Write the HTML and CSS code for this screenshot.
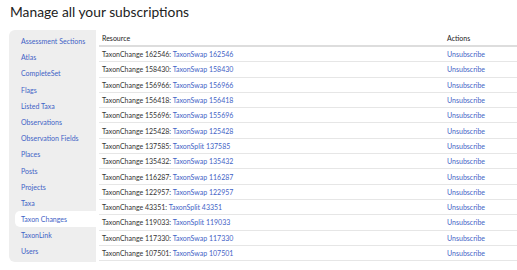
FILE: index.html
```html
<!DOCTYPE html>
<html lang="en">
<head>
    <meta charset="UTF-8">
    <title>Manage all your subscriptions</title>
    <link rel="stylesheet" href="styles.css">
</head>
<body>
    <h1>Manage all your subscriptions</h1>
    <div class="layout">
        <ul class="side-nav">
            <li><a href="#">Assessment Sections</a></li>
            <li><a href="#">Atlas</a></li>
            <li><a href="#">CompleteSet</a></li>
            <li><a href="#">Flags</a></li>
            <li><a href="#">Listed Taxa</a></li>
            <li><a href="#">Observations</a></li>
            <li><a href="#">Observation Fields</a></li>
            <li><a href="#">Places</a></li>
            <li><a href="#">Posts</a></li>
            <li><a href="#">Projects</a></li>
            <li><a href="#">Taxa</a></li>
            <li class="active"><a href="#">Taxon Changes</a></li>
            <li><a href="#">TaxonLink</a></li>
            <li><a href="#">Users</a></li>
        </ul>

        <table class="subs-table">
            <thead>
                <tr>
                    <th>Resource</th>
                    <th class="actions">Actions</th>
                </tr>
            </thead>
            <tbody>
                <tr><td>TaxonChange 162546: <a href="#">TaxonSwap 162546</a></td><td class="actions"><a href="#">Unsubscribe</a></td></tr>
                <tr><td>TaxonChange 158430: <a href="#">TaxonSwap 158430</a></td><td class="actions"><a href="#">Unsubscribe</a></td></tr>
                <tr><td>TaxonChange 156966: <a href="#">TaxonSwap 156966</a></td><td class="actions"><a href="#">Unsubscribe</a></td></tr>
                <tr><td>TaxonChange 156418: <a href="#">TaxonSwap 156418</a></td><td class="actions"><a href="#">Unsubscribe</a></td></tr>
                <tr><td>TaxonChange 155696: <a href="#">TaxonSwap 155696</a></td><td class="actions"><a href="#">Unsubscribe</a></td></tr>
                <tr><td>TaxonChange 125428: <a href="#">TaxonSwap 125428</a></td><td class="actions"><a href="#">Unsubscribe</a></td></tr>
                <tr><td>TaxonChange 137585: <a href="#">TaxonSplit 137585</a></td><td class="actions"><a href="#">Unsubscribe</a></td></tr>
                <tr><td>TaxonChange 135432: <a href="#">TaxonSwap 135432</a></td><td class="actions"><a href="#">Unsubscribe</a></td></tr>
                <tr><td>TaxonChange 116287: <a href="#">TaxonSwap 116287</a></td><td class="actions"><a href="#">Unsubscribe</a></td></tr>
                <tr><td>TaxonChange 122957: <a href="#">TaxonSwap 122957</a></td><td class="actions"><a href="#">Unsubscribe</a></td></tr>
                <tr><td>TaxonChange 43351: <a href="#">TaxonSplit 43351</a></td><td class="actions"><a href="#">Unsubscribe</a></td></tr>
                <tr><td>TaxonChange 119033: <a href="#">TaxonSplit 119033</a></td><td class="actions"><a href="#">Unsubscribe</a></td></tr>
                <tr><td>TaxonChange 117330: <a href="#">TaxonSwap 117330</a></td><td class="actions"><a href="#">Unsubscribe</a></td></tr>
                <tr><td>TaxonChange 107501: <a href="#">TaxonSwap 107501</a></td><td class="actions"><a href="#">Unsubscribe</a></td></tr>
            </tbody>
        </table>
    </div>
</body>
</html>
```

FILE: styles.css
```css
body {
    margin: 0;
    padding: 0 0 0 9px;
    font-family: Lato, "Open Sans", sans-serif;
    color: #333;
    background: white;
}

a {
    color: #3f63c6;
    text-decoration: none;
}

h1 {
    font-weight: 400;
    font-size: 13.8px;
    line-height: 18px;
    margin: 3px 0 9px 1px;
    color: #222;
}

.layout {
    display: flex;
    align-items: flex-start;
}

.side-nav {
    list-style: none;
    margin: 0;
    padding: 3px 0 2px 6px;
    width: 81px;
    flex-shrink: 0;
    background: #eeeeee;
    border-radius: 6px 0 0 6px;
    font-size: 7px;
}

.side-nav li {
    height: 16.2px;
    line-height: 16.2px;
    padding-left: 6px;
    border-radius: 5px 0 0 5px;
}

.side-nav li.active {
    background: white;
}

.subs-table {
    flex: 1;
    margin-left: 3px;
    border-collapse: collapse;
    font-size: 7px;
}

.subs-table th {
    text-align: left;
    font-weight: 400;
    color: #222;
    height: 13px;
    padding: 1px 3px;
    border-bottom: 2px solid #ddd;
}

.subs-table td {
    height: 14.3px;
    padding: 0 3px;
    border-bottom: 1px solid #e6e6e6;
}

.subs-table .actions {
    width: 67px;
}
```
